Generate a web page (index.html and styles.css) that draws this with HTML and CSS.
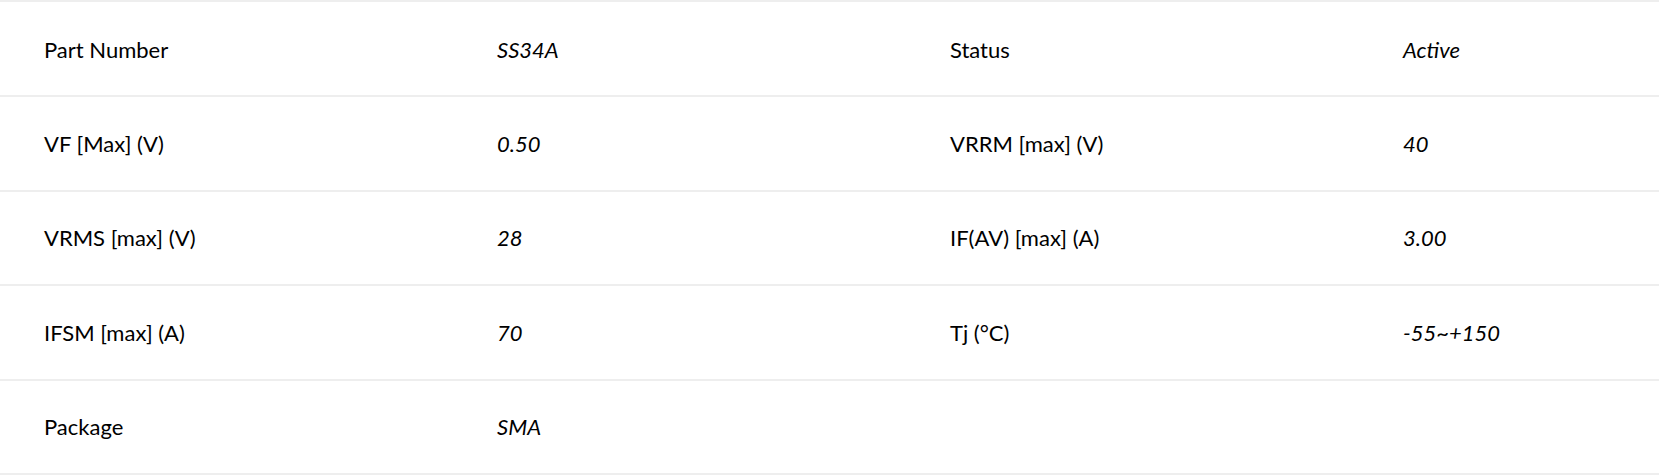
FILE: index.html
```html
<!DOCTYPE html>
<html lang="en">
<head>
<meta charset="utf-8">
<title>SS34A</title>
<link rel="stylesheet" href="styles.css">
</head>
<body>
<div class="spec-table">
  <div class="spec-row">
    <div class="label">Part Number</div><div class="value">SS34A</div>
    <div class="label">Status</div><div class="value">Active</div>
  </div>
  <div class="spec-row">
    <div class="label">VF [Max] (V)</div><div class="value">0.50</div>
    <div class="label">VRRM [max] (V)</div><div class="value">40</div>
  </div>
  <div class="spec-row">
    <div class="label">VRMS [max] (V)</div><div class="value">28</div>
    <div class="label">IF(AV) [max] (A)</div><div class="value">3.00</div>
  </div>
  <div class="spec-row">
    <div class="label">IFSM [max] (A)</div><div class="value">70</div>
    <div class="label">Tj (°C)</div><div class="value">-55~+150</div>
  </div>
  <div class="spec-row">
    <div class="label">Package</div><div class="value">SMA</div>
    <div class="label"></div><div class="value"></div>
  </div>
</div>
</body>
</html>
```
FILE: styles.css
```css
html, body {
  margin: 0;
  padding: 0;
  background: #ffffff;
}
.spec-table {
  font-family: "Lato", "Open Sans", sans-serif;
  font-size: 22px;
  color: #000000;
  border-top: 2px solid #eeeeee;
  padding-top: 1px;
}
.spec-row {
  display: grid;
  grid-template-columns: 453px 453px 453px 1fr;
  align-items: center;
  height: 94.4px;
  box-sizing: border-box;
  border-bottom: 2px solid #eeeeee;
}
.label, .value {
  padding-left: 44px;
}
.value {
  font-style: italic;
}
```
